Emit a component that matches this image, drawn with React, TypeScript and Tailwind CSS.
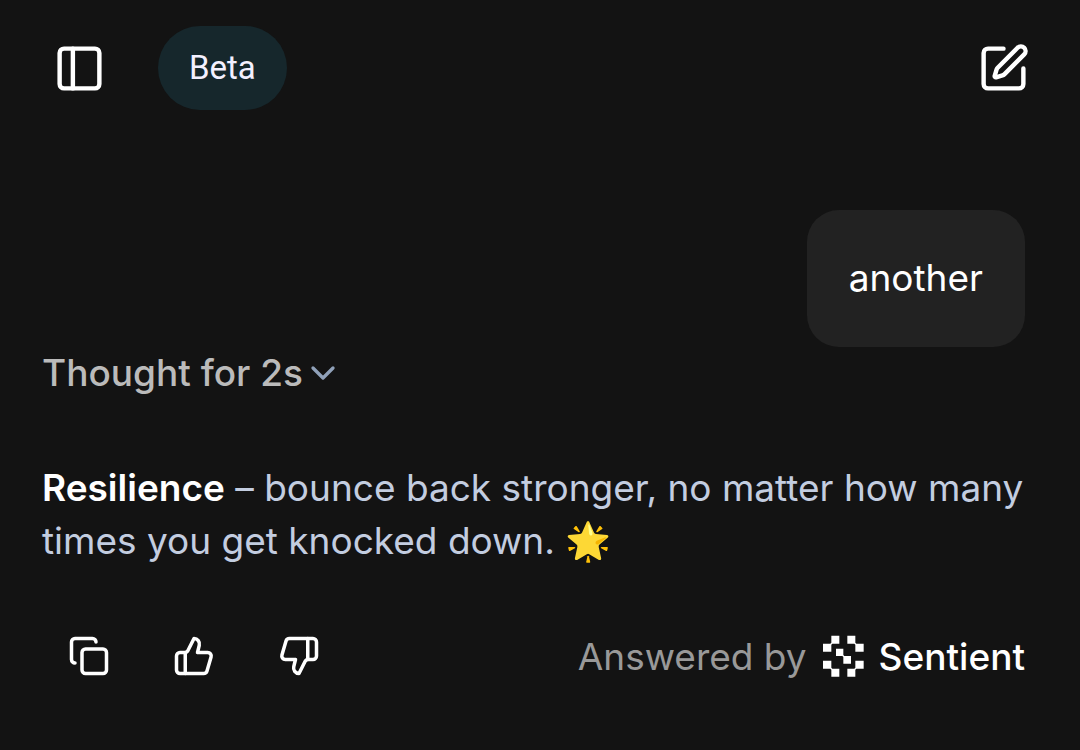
import { ChevronDown, Copy, PanelLeft, SquarePen, ThumbsDown, ThumbsUp } from "lucide-react"

function SentientLogo() {
  return (
    <svg viewBox="0 0 126 126" className="size-[42px]" fill="currentColor" aria-hidden="true">
      <path d="M28 2h24v24H31l-3 3v21H3V26h22l3-3z" />
      <path d="M100 2H76v24h21l3 3v21h25V26h-22l-3-3z" />
      <path d="M28 125h24v-24H31l-3-3V77H3v24h22l3 3z" />
      <path d="M100 125H76v-24h21l3-3V77h25v24h-22l-3 3z" />
      <path d="M42 41h22v19l3 3h20v23H64V66l-3-3H42z" />
    </svg>
  )
}

function Header() {
  return (
    <header className="flex items-center justify-between pl-[53px] pr-[50px] pt-[26px]">
      <div className="flex items-center gap-[52px]">
        <button type="button" aria-label="Toggle sidebar">
          <PanelLeft className="size-[53px]" />
        </button>
        <button
          type="button"
          className="h-[84px] rounded-full bg-[#16272c] px-[31px] font-[Roboto,sans-serif] text-[33px] leading-10 text-[#f3f0ff]"
        >
          Beta
        </button>
      </div>
      <button type="button" aria-label="New chat">
        <SquarePen className="size-[53px]" />
      </button>
    </header>
  )
}

function MessageActions() {
  const actions = [
    { label: "Copy", Icon: Copy },
    { label: "Good response", Icon: ThumbsUp },
    { label: "Bad response", Icon: ThumbsDown },
  ]

  return (
    <div className="flex gap-[21px]">
      {actions.map(({ label, Icon }) => (
        <button key={label} type="button" aria-label={label} className="p-[21px]">
          <Icon className="size-[42px]" />
        </button>
      ))}
    </div>
  )
}

export default function App() {
  return (
    <div className="min-h-screen bg-[#131313] font-[Inter,sans-serif] text-[37px] leading-[53px] text-white">
      <Header />

      <main className="pl-[42px] pr-[55px] pt-[100px]">
        <div className="flex justify-end">
          <p className="rounded-[32px] bg-[#222222] px-[42px] pt-[41px] pb-[43px]">another</p>
        </div>

        <button type="button" className="flex items-center leading-[51px] font-medium text-[#bbbbbb]">
          Thought for 2s
          <ChevronDown className="size-10 text-slate-400" strokeWidth={2} />
        </button>

        <p className="mt-[63px] text-[#c3cde0]">
          <strong className="font-semibold text-white">Resilience</strong> – bounce back stronger, no matter how many
          times you get knocked down. 🌟
        </p>

        <div className="mt-[47px] flex items-center justify-between pl-[5px]">
          <MessageActions />
          <div className="flex items-center gap-[15px]">
            <span className="text-[#999999]">Answered by</span>
            <SentientLogo />
            <span className="font-medium">Sentient</span>
          </div>
        </div>
      </main>
    </div>
  )
}
